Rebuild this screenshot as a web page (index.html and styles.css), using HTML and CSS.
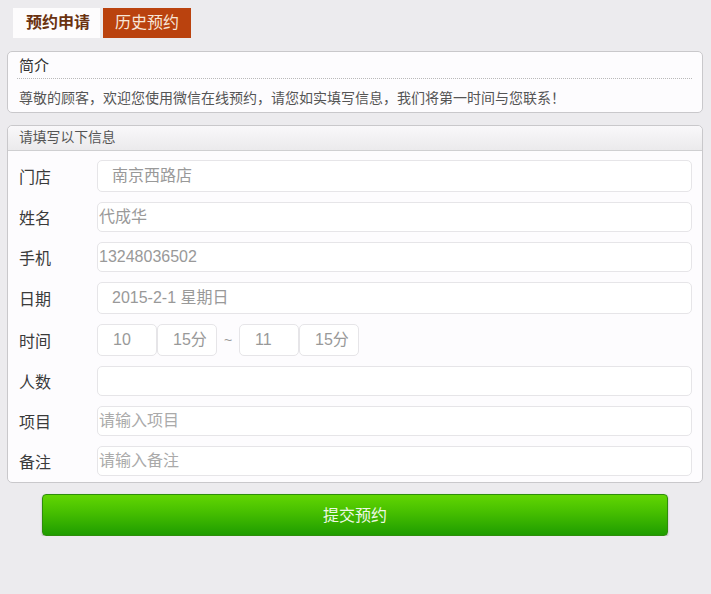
FILE: index.html
```html
<!DOCTYPE html>
<html lang="zh-CN">
<head>
<meta charset="utf-8">
<title>预约申请</title>
<link rel="stylesheet" href="styles.css">
</head>
<body>
<div class="page">
  <div class="tabs">
    <div class="tab tab-active">预约申请</div>
    <div class="tab tab-other">历史预约</div>
  </div>

  <div class="box intro">
    <div class="intro-title">简介</div>
    <div class="intro-text">尊敬的顾客，欢迎您使用微信在线预约，请您如实填写信息，我们将第一时间与您联系！</div>
  </div>

  <div class="box form">
    <div class="form-head">请填写以下信息</div>
    <div class="form-body">
      <div class="row">
        <div class="label">门店</div>
        <div class="field field-sel">南京西路店</div>
      </div>
      <div class="row">
        <div class="label">姓名</div>
        <div class="field">代成华</div>
      </div>
      <div class="row">
        <div class="label">手机</div>
        <div class="field">13248036502</div>
      </div>
      <div class="row">
        <div class="label">日期</div>
        <div class="field field-sel">2015-2-1 星期日</div>
      </div>
      <div class="row">
        <div class="label">时间</div>
        <div class="times">
          <div class="field small">10</div>
          <div class="field small">15分</div>
          <div class="tilde">~</div>
          <div class="field small">11</div>
          <div class="field small">15分</div>
        </div>
      </div>
      <div class="row">
        <div class="label">人数</div>
        <div class="field"></div>
      </div>
      <div class="row">
        <div class="label">项目</div>
        <div class="field placeholder">请输入项目</div>
      </div>
      <div class="row">
        <div class="label">备注</div>
        <div class="field placeholder">请输入备注</div>
      </div>
    </div>
  </div>

  <div class="submit">提交预约</div>
</div>
</body>
</html>
```

FILE: styles.css
```css
* { box-sizing: border-box; }

html, body {
  margin: 0;
  padding: 0;
  background: #ecebee;
}

body {
  font-family: "Liberation Sans", "Noto Sans CJK SC", sans-serif;
  color: #333;
}

.page {
  padding: 8px 8px 0 7px;
}

.tabs {
  display: flex;
  gap: 3px;
  padding-left: 6px;
  height: 30px;
}

.tab {
  height: 30px;
  line-height: 30px;
  font-size: 16px;
  font-weight: bold;
  text-align: center;
}

.tab-active {
  width: 87px;
  background: #fdfcfd;
  color: #6a3210;
  padding-left: 3px;
}

.tab-other {
  width: 88px;
  background: #ba420e;
  color: #f7e6d8;
  font-weight: normal;
}

.box {
  background: #fdfcfe;
  border: 1px solid #c9c8cb;
  border-radius: 5px;
}

.intro {
  margin-top: 13px;
  height: 62px;
  padding: 3px 10px 0 9px;
}

.intro-title {
  font-size: 15px;
  line-height: 21px;
  height: 24px;
  padding-left: 2px;
  border-bottom: 1px dotted #b9b9b9;
  color: #333;
}

.intro-text {
  font-size: 14px;
  line-height: 20px;
  margin-top: 9px;
  padding-left: 2px;
  color: #555;
}

.form {
  margin-top: 12px;
  height: 358px;
}

.form-head {
  height: 25px;
  line-height: 24px;
  padding-left: 11px;
  font-size: 13.8px;
  color: #555;
  background: linear-gradient(#f9f8fa, #ebeaec);
  border-bottom: 1px solid #cfcfd1;
  border-radius: 5px 5px 0 0;
}

.form-body {
  padding: 9px 10px 0 11px;
  display: flex;
  flex-direction: column;
  gap: 10px;
}

.row {
  display: flex;
  align-items: center;
}

.label {
  width: 78px;
  flex: none;
  font-size: 16px;
  color: #3a3a3a;
  font-family: "Noto Sans CJK SC", sans-serif;
}

.field {
  flex: 1;
  height: 30px;
  line-height: 28px;
  border: 1px solid #e6e5e8;
  border-radius: 5px;
  background: #fff;
  font-size: 16px;
  color: #999;
  padding-left: 1px;
}

.field-sel {
  height: 32px;
  line-height: 30px;
  padding-left: 14px;
}

.placeholder {
  color: #aaa;
}

.times {
  flex: 1;
  display: flex;
  align-items: center;
}

.field.small {
  flex: none;
  width: 60px;
  height: 32px;
  line-height: 30px;
  padding-left: 15px;
}

.tilde {
  width: 22px;
  text-align: center;
  color: #999;
  font-size: 14px;
}

.submit {
  margin: 11px 35px 0 35px;
  height: 42px;
  line-height: 38px;
  text-align: center;
  font-size: 16px;
  color: #eef8e6;
  font-family: "Noto Sans CJK SC", sans-serif;
  background: linear-gradient(#62d602, #45be00 45%, #1f9d00);
  border: 1px solid #2e8d0b;
  border-radius: 4px;
  box-shadow: 0 1px 2px rgba(0, 0, 0, 0.3);
}
```
